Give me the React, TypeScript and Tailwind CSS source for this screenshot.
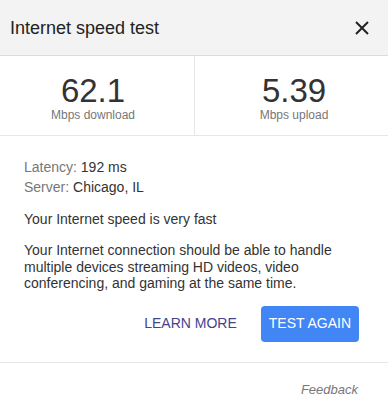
const App = () => {
  return (
    <div
      className="w-[388px] h-[419px] bg-white text-[#333]"
      style={{ fontFamily: '"Liberation Sans", Arial, sans-serif' }}
    >
      {/* header */}
      <div className="flex h-[56px] items-center justify-between border-b border-[#dcdcdc] bg-[#f3f3f3] pl-[10px] pr-[14px]">
        <h2 className="text-[18px] leading-[22px] text-[#222]">Internet speed test</h2>
        <button className="flex h-6 w-6 items-center justify-center">
          <svg width="14" height="14" viewBox="0 0 14 14">
            <path d="M1 1 L13 13 M13 1 L1 13" stroke="#222" strokeWidth="2" />
          </svg>
        </button>
      </div>

      {/* results */}
      <div className="flex h-[80px] border-b border-[#e6e6e6]">
        <div className="flex w-[195px] flex-col items-center border-r border-[#e6e6e6] pt-[18px] pr-2">
          <div className="text-[33px] leading-[34px] text-[#333]">62.1</div>
          <div className="text-[12px] leading-[14px] text-[#777]">Mbps download</div>
        </div>
        <div className="flex flex-1 flex-col items-center pt-[18px] pl-[5px]">
          <div className="text-[33px] leading-[34px] text-[#333]">5.39</div>
          <div className="text-[12px] leading-[14px] text-[#777]">Mbps upload</div>
        </div>
      </div>

      {/* details */}
      <div className="px-6 pt-[21px] text-[14px]">
        <div className="leading-[20px]">
          <span className="text-[#777]">Latency:</span> 192 ms
        </div>
        <div className="leading-[20px]">
          <span className="text-[#777]">Server:</span> Chicago, IL
        </div>
        <p className="mt-3 leading-[20px]">Your Internet speed is very fast</p>
        <p className="mt-[13px] leading-[16.5px]">
          Your Internet connection should be able to handle multiple devices streaming HD videos, video
          conferencing, and gaming at the same time.
        </p>
      </div>

      {/* actions */}
      <div className="mt-[14px] flex items-center justify-end gap-4 pr-[29px]">
        <button className="h-9 rounded-sm px-2 text-[14px] text-[#45438f]">LEARN MORE</button>
        <button className="h-9 rounded-sm bg-[#4285f4] px-2 text-[14px] text-white">TEST AGAIN</button>
      </div>

      <div className="mt-5 border-t border-[#e6e6e6]" />

      {/* footer */}
      <div className="flex justify-end pr-[30px] pt-[19px]">
        <a className="text-[13px] italic leading-[16px] text-[#777]">Feedback</a>
      </div>
    </div>
  );
};

export default App;
